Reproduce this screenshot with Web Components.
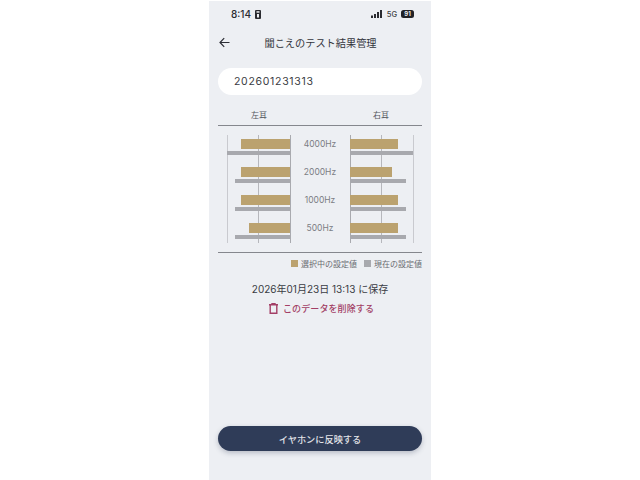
<!DOCTYPE html>
<html lang="ja">
<head>
<meta charset="utf-8">
<style>
  html, body { margin: 0; height: 100%; background: #fff; }
  body { display: flex; justify-content: center; overflow: hidden; font-family: "Inter", "Noto Sans CJK JP", sans-serif; color: #33353c; }
</style>
</head>
<body>
<hearing-screen>
  <status-bar></status-bar>
  <title-bar>聞こえのテスト結果管理</title-bar>
  <name-field>202601231313</name-field>
  <ear-chart></ear-chart>
  <saved-info date="2026年01月23日 13:13 に保存" action="このデータを削除する"></saved-info>
  <apply-button>イヤホンに反映する</apply-button>
</hearing-screen>

<script>
  function tpl(html) {
    const t = document.createElement('template')
    t.innerHTML = html
    return t
  }

  class Base extends HTMLElement {
    constructor() {
      super()
      this.attachShadow({ mode: 'open' })
      this.shadowRoot.appendChild(this.constructor.template.content.cloneNode(true))
    }
  }

  class HearingScreen extends Base {
    static template = tpl(`
      <style>
        :host { display: flex; flex-direction: column; box-sizing: border-box; width: 222px; height: 480px; margin-top: 1px; padding: 0 9px 30px; background: #edeff3; }
      </style>
      <slot></slot>
    `)
  }

  class StatusBar extends Base {
    static template = tpl(`
      <style>
        :host { display: flex; align-items: center; height: 26px; padding: 0 8px 0 13px; font-size: 10px; font-weight: 500; color: #2a2b30; }
        svg { display: block; }
        .sim { margin-left: 4px; }
        .right { margin-left: auto; display: flex; align-items: center; gap: 4px; }
        .net { font-size: 7.5px; color: #3c3e44; }
        .batt { display: flex; align-items: center; justify-content: center; width: 13px; height: 8px; border-radius: 2.5px; background: #202126; color: #edeff3; font-size: 6px; font-weight: 700; line-height: 8px; }
      </style>
      <span>8:14</span>
      <svg class="sim" width="6" height="9" viewBox="0 0 6 9"><rect width="6" height="9" rx="1" fill="#2a2b30"/><rect x="1.5" y="1.2" width="3" height="1.5" fill="#edeff3"/><rect x="2" y="4" width="2" height="3.5" fill="#edeff3"/></svg>
      <span class="right">
        <svg width="12" height="8" viewBox="0 0 12 8" fill="#2a2b30"><rect x="0" y="5.5" width="2" height="2.5"/><rect x="3" y="4" width="2" height="4"/><rect x="6" y="2" width="2" height="6"/><rect x="9" y="0" width="2" height="8"/></svg>
        <span class="net">5G</span>
        <span class="batt">91</span>
      </span>
    `)
  }

  class TitleBar extends Base {
    static template = tpl(`
      <style>
        :host { display: block; position: relative; height: 32px; line-height: 32px; text-align: center; font-size: 10.2px; font-weight: 400; color: #33353c; padding-left: 1px; }
        svg { position: absolute; left: 1px; top: 10px; }
      </style>
      <svg width="11" height="11" viewBox="0 0 11 11" fill="none" stroke="#2c2e35" stroke-width="1.2"><path d="M10.5 5.5H1M5.2 1.2 1 5.5l4.2 4.3"/></svg>
      <slot></slot>
    `)
  }

  class NameField extends Base {
    static template = tpl(`
      <style>
        :host { display: flex; align-items: center; box-sizing: border-box; height: 27px; margin-top: 9px; padding-left: 16px; background: #fff; border-radius: 14px; font-size: 10.5px; letter-spacing: .7px; color: #3a3c43; }
      </style>
      <slot></slot>
    `)
  }

  // [label, left selected, left current, right selected, right current] in px out of 63
  const rows = [
    ['4000Hz', 49, 63, 48, 63],
    ['2000Hz', 49, 55, 42, 56],
    ['1000Hz', 49, 55, 48, 56],
    ['500Hz', 41, 55, 48, 56]
  ]

  class EarChart extends Base {
    static template = tpl(`
      <style>
        :host { display: block; margin-top: 11px; }
        .heads { display: grid; grid-template-columns: 82px 40px 82px; height: 19px; line-height: 18px; font-size: 8px; color: #55575e; text-align: center; border-bottom: 1px solid #85878d; }
        .plot { display: grid; grid-template-columns: 64px 59px 64px; justify-content: center; height: 100px; padding: 9px 0 17px; border-bottom: 1px solid #85878d; }
        .axis { display: grid; grid-auto-rows: 28px; height: 108px; background:
          linear-gradient(#c9cacf, #c9cacf) 0 0 / 1px 100% no-repeat,
          linear-gradient(#b6b7bc, #b6b7bc) 31px 0 / 1px 100% no-repeat,
          linear-gradient(#a9aaaf, #a9aaaf) 63px 0 / 1px 100% no-repeat; }
        .axis.r { background:
          linear-gradient(#a9aaaf, #a9aaaf) 0 0 / 1px 100% no-repeat,
          linear-gradient(#b6b7bc, #b6b7bc) 31px 0 / 1px 100% no-repeat,
          linear-gradient(#c9cacf, #c9cacf) 63px 0 / 1px 100% no-repeat; }
        .pair { display: flex; flex-direction: column; gap: 2px; padding-top: 4px; }
        .axis.l .pair { align-items: flex-end; padding-right: 1px; }
        .axis.r .pair { align-items: flex-start; }
        .sel { height: 10px; background: #bba26f; }
        .cur { height: 4px; background: #a8a9ae; }
        .freq { display: grid; grid-auto-rows: 28px; font-size: 8.5px; color: #7b7d83; text-align: center; line-height: 18px; }
        .legend { display: flex; justify-content: flex-end; align-items: center; height: 20px; font-size: 8px; color: #6a6c72; }
        .legend i { display: block; width: 7px; height: 7px; margin-right: 3px; }
        .legend span { display: flex; align-items: center; }
        .legend span + span { margin-left: 7px; }
      </style>
      <div class="heads"><span>左耳</span><span></span><span>右耳</span></div>
      <div class="plot">
        <div class="axis l"></div>
        <div class="freq"></div>
        <div class="axis r"></div>
      </div>
      <div class="legend">
        <span><i style="background:#bba26f"></i>選択中の設定値</span>
        <span><i style="background:#a8a9ae"></i>現在の設定値</span>
      </div>
    `)

    connectedCallback() {
      const q = s => this.shadowRoot.querySelector(s)
      for (const [hz, ls, lc, rs, rc] of rows) {
        q('.axis.l').insertAdjacentHTML('beforeend', `<div class="pair"><div class="sel" style="width:${ls}px"></div><div class="cur" style="width:${lc}px"></div></div>`)
        q('.axis.r').insertAdjacentHTML('beforeend', `<div class="pair"><div class="sel" style="width:${rs}px"></div><div class="cur" style="width:${rc}px"></div></div>`)
        q('.freq').insertAdjacentHTML('beforeend', `<span>${hz}</span>`)
      }
    }
  }

  class SavedInfo extends Base {
    static template = tpl(`
      <style>
        :host { display: flex; flex-direction: column; align-items: center; flex: 1; margin-top: 6px; }
        .date { height: 19px; line-height: 20px; font-size: 10px; color: #3a3c43; }
        .del { display: flex; align-items: center; gap: 5px; height: 20px; padding-left: 3px; font-size: 9px; font-weight: 500; color: #a33f66; letter-spacing: .1px; }
        svg { display: block; }
      </style>
      <div class="date"></div>
      <div class="del">
        <svg width="9" height="11" viewBox="0 0 9 11" fill="none" stroke="#a33f66" stroke-width="1.4"><path d="M0 1.8h9M3 1.6V.6h3v1M1.2 2v8.3h6.6V2"/></svg>
        <span class="txt"></span>
      </div>
    `)

    connectedCallback() {
      this.shadowRoot.querySelector('.date').textContent = this.getAttribute('date')
      this.shadowRoot.querySelector('.txt').textContent = this.getAttribute('action')
    }
  }

  class ApplyButton extends Base {
    static template = tpl(`
      <style>
        :host { display: flex; align-items: center; justify-content: center; height: 25px; border-radius: 13px; background: #2f3c58; color: #e2e4e9; font-size: 9.2px; font-weight: 500; box-shadow: 0 2px 5px rgba(60, 70, 95, .3); }
      </style>
      <slot></slot>
    `)
  }

  customElements.define('hearing-screen', HearingScreen)
  customElements.define('status-bar', StatusBar)
  customElements.define('title-bar', TitleBar)
  customElements.define('name-field', NameField)
  customElements.define('ear-chart', EarChart)
  customElements.define('saved-info', SavedInfo)
  customElements.define('apply-button', ApplyButton)
</script>
</body>
</html>
